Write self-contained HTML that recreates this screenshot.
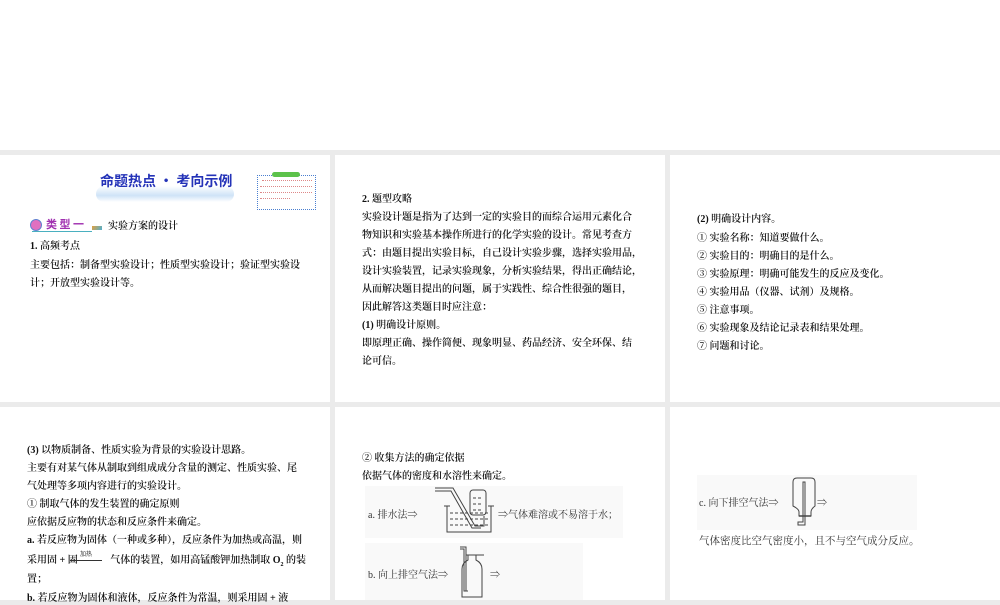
<!DOCTYPE html>
<html><head><meta charset="utf-8"><style>
body{margin:0;width:1000px;height:600px;position:relative;background:#ebebeb;overflow:hidden;font-family:"Liberation Sans","Noto Sans CJK SC",sans-serif;}
.top{position:absolute;left:0;top:0;width:1000px;height:150px;background:#fff}
.s{position:absolute;background:#fff;overflow:hidden}
.t{position:absolute;font-size:10px;line-height:12px;color:#111;white-space:nowrap;font-family:"Liberation Serif","Noto Serif CJK SC",serif;font-weight:600;margin-top:3px}
.g{position:absolute;background:#f9f9f9}
.d{position:absolute;font-size:10px;color:#333;white-space:nowrap;font-family:"Liberation Serif","Noto Serif CJK SC",serif}
</style></head><body>
<div class="top"></div>
<div class="s" style="left:0;top:155px;width:330px;height:247px"></div>
<div class="s" style="left:335px;top:155px;width:330px;height:247px"></div>
<div class="s" style="left:670px;top:155px;width:330px;height:247px"></div>
<div class="s" style="left:0;top:407px;width:330px;height:193px"></div>
<div class="s" style="left:335px;top:407px;width:330px;height:193px"></div>
<div class="s" style="left:670px;top:407px;width:330px;height:193px"></div>

<!-- slide 1 -->
<div style="position:absolute;left:96px;top:186px;width:138px;height:16px;background:linear-gradient(#fff,#cfe3f7 60%,#fff);border-radius:8px"></div>
<div style="position:absolute;left:100px;top:172px;font-size:14px;font-weight:bold;color:#2433b8;font-family:'Noto Sans CJK SC',sans-serif;white-space:nowrap;line-height:18px">命题热点 · 考向示例</div>
<div style="position:absolute;left:257px;top:175px;width:57px;height:33px;border:1px dotted #4a7fd0"></div>
<div style="position:absolute;left:272px;top:172px;width:28px;height:5px;background:#5cc24a;border-radius:3px"></div>
<div style="position:absolute;left:262px;top:180px;width:50px;height:1px;border-top:1px dotted #d88;"></div>
<div style="position:absolute;left:260px;top:186px;width:52px;height:1px;border-top:1px dotted #d88;"></div>
<div style="position:absolute;left:260px;top:192px;width:52px;height:1px;border-top:1px dotted #d88;"></div>
<div style="position:absolute;left:260px;top:198px;width:30px;height:1px;border-top:1px dotted #d88;"></div>
<div style="position:absolute;left:30px;top:219px;width:10px;height:10px;border-radius:50%;border:1px solid #6080d0;background:#e070c0"></div>
<div style="position:absolute;left:46px;top:218px;font-size:11px;color:#a030b0;font-weight:bold;font-family:'Noto Sans CJK SC',sans-serif;line-height:12px;white-space:nowrap">类 型 一</div>
<div style="position:absolute;left:32px;top:231px;width:60px;height:1px;background:#4ab0c0"></div>
<div style="position:absolute;left:92px;top:226px;width:10px;height:4px;background:linear-gradient(120deg,#e0a040,#50b0d0)"></div>
<div class="t" style="left:108px;top:218px">实验方案的设计</div>
<div class="t" style="left:30px;top:238px">1. 高频考点</div>
<div class="t" style="left:30px;top:257px">主要包括：制备型实验设计；性质型实验设计；验证型实验设</div>
<div class="t" style="left:30px;top:275px">计；开放型实验设计等。</div>

<!-- slide 2 -->
<div class="t" style="left:362px;top:191px">2. 题型攻略</div>
<div class="t" style="left:362px;top:209px">实验设计题是指为了达到一定的实验目的而综合运用元素化合</div>
<div class="t" style="left:362px;top:227px">物知识和实验基本操作所进行的化学实验的设计。常见考查方</div>
<div class="t" style="left:362px;top:245px">式：由题目提出实验目标，自己设计实验步骤，选择实验用品，</div>
<div class="t" style="left:362px;top:263px">设计实验装置，记录实验现象，分析实验结果，得出正确结论，</div>
<div class="t" style="left:362px;top:281px">从而解决题目提出的问题，属于实践性、综合性很强的题目，</div>
<div class="t" style="left:362px;top:299px">因此解答这类题目时应注意：</div>
<div class="t" style="left:362px;top:317px">(1) 明确设计原则。</div>
<div class="t" style="left:362px;top:335px">即原理正确、操作简便、现象明显、药品经济、安全环保、结</div>
<div class="t" style="left:362px;top:353px">论可信。</div>

<!-- slide 3 -->
<div class="t" style="left:697px;top:211px">(2) 明确设计内容。</div>
<div class="t" style="left:697px;top:230px">① 实验名称：知道要做什么。</div>
<div class="t" style="left:697px;top:248px">② 实验目的：明确目的是什么。</div>
<div class="t" style="left:697px;top:266px">③ 实验原理：明确可能发生的反应及变化。</div>
<div class="t" style="left:697px;top:284px">④ 实验用品（仪器、试剂）及规格。</div>
<div class="t" style="left:697px;top:302px">⑤ 注意事项。</div>
<div class="t" style="left:697px;top:320px">⑥ 实验现象及结论记录表和结果处理。</div>
<div class="t" style="left:697px;top:338px">⑦ 问题和讨论。</div>

<!-- slide 4 -->
<div class="t" style="left:27px;top:442px">(3) 以物质制备、性质实验为背景的实验设计思路。</div>
<div class="t" style="left:27px;top:460px">主要有对某气体从制取到组成成分含量的测定、性质实验、尾</div>
<div class="t" style="left:27px;top:478px">气处理等多项内容进行的实验设计。</div>
<div class="t" style="left:27px;top:496px">① 制取气体的发生装置的确定原则</div>
<div class="t" style="left:27px;top:514px">应依据反应物的状态和反应条件来确定。</div>
<div class="t" style="left:27px;top:532px">a. 若反应物为固体（一种或多种），反应条件为加热或高温，则</div>
<div class="t" style="left:27px;top:552px">采用固 + 固<span style="display:inline-block;width:30px"></span> 气体的装置，如用高锰酸钾加热制取 O<sub style="font-size:6px">2</sub> 的装</div>
<div style="position:absolute;left:80px;top:549px;font-size:6px;color:#333">加热</div>
<div style="position:absolute;left:70px;top:560px;width:32px;height:1px;background:#333"></div>
<div class="t" style="left:27px;top:571px">置；</div>
<div class="t" style="left:27px;top:590px">b. 若反应物为固体和液体，反应条件为常温，则采用固 + 液</div>

<!-- slide 5 -->
<div class="t" style="left:362px;top:450px">② 收集方法的确定依据</div>
<div class="t" style="left:362px;top:468px">依据气体的密度和水溶性来确定。</div>
<div class="g" style="left:365px;top:486px;width:258px;height:52px"></div>
<div class="g" style="left:365px;top:543px;width:218px;height:57px"></div>
<div class="d" style="left:368px;top:506px">a. 排水法⇒</div>
<div class="d" style="left:498px;top:506px">⇒气体难溶或不易溶于水；</div>
<svg style="position:absolute;left:430px;top:486px" width="70" height="52" viewBox="0 0 70 52">
<g fill="none" stroke="#444" stroke-width="1">
<path d="M17 20v26h44V20"/><path d="M14 20h6M58 20h6"/>
<rect x="40" y="4" width="16" height="25" rx="3"/>
<path d="M5 2h18l22 38h9v-10"/><path d="M5 5h16l21 37h9"/>
<path d="M20 27h38M20 33h38M20 39h38" stroke-dasharray="3 2"/>
<path d="M43 12h10M43 18h10M43 24h10" stroke-dasharray="3 2"/>
</g></svg>
<div class="d" style="left:368px;top:566px">b. 向上排空气法⇒</div>
<div class="d" style="left:490px;top:566px">⇒</div>
<svg style="position:absolute;left:458px;top:545px" width="30" height="55" viewBox="0 0 30 55">
<g fill="none" stroke="#444" stroke-width="1">
<path d="M8 10h18M10 10v5q-6 3-6 9v28h20V24q0-6-6-9v-5"/>
<path d="M2 2h6v44M2 4h4v42h4" />
</g></svg>

<!-- slide 6 -->
<div class="g" style="left:697px;top:475px;width:220px;height:55px"></div>
<div class="d" style="left:699px;top:494px">c. 向下排空气法⇒</div>
<div class="d" style="left:817px;top:494px">⇒</div>
<svg style="position:absolute;left:790px;top:476px" width="30" height="54" viewBox="0 0 30 54">
<g fill="none" stroke="#444" stroke-width="1">
<path d="M3 6q0-4 4-4h14q4 0 4 4v24q-4 3-4 6v4H9v-4q0-3-6-6z"/>
<path d="M9 40h12" stroke-width="1.5"/>
<path d="M13 6v40h-5v3h7V6z"/>
</g></svg>
<div class="d" style="left:699px;top:533px;font-size:10.5px">气体密度比空气密度小，且不与空气成分反应。</div>
</body></html>
